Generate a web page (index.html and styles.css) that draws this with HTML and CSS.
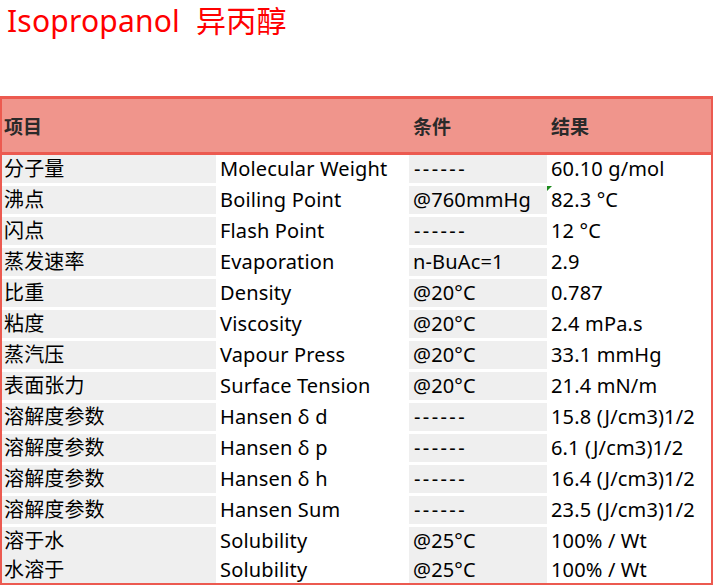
FILE: index.html
```html
<!DOCTYPE html>
<html lang="zh">
<head>
<meta charset="utf-8">
<title>Isopropanol 异丙醇</title>
<link rel="stylesheet" href="styles.css">
</head>
<body>
<h1 class="title">Isopropanol &nbsp;异丙醇</h1>
<table class="props">
  <colgroup>
    <col class="c1"><col class="c2"><col class="c3"><col class="c4">
  </colgroup>
  <thead>
    <tr><th>项目</th><th></th><th>条件</th><th>结果</th></tr>
  </thead>
  <tbody>
    <tr><td class="g">分子量</td><td>Molecular Weight</td><td class="g"><span class="dash">------</span></td><td>60.10 g/mol</td></tr>
    <tr><td class="g">沸点</td><td>Boiling Point</td><td class="g">@760mmHg</td><td class="note">82.3 °C</td></tr>
    <tr><td class="g">闪点</td><td>Flash Point</td><td class="g"><span class="dash">------</span></td><td>12 °C</td></tr>
    <tr><td class="g">蒸发速率</td><td>Evaporation</td><td class="g">n-BuAc=1</td><td>2.9</td></tr>
    <tr><td class="g">比重</td><td>Density</td><td class="g">@20°C</td><td>0.787</td></tr>
    <tr><td class="g">粘度</td><td>Viscosity</td><td class="g">@20°C</td><td>2.4 mPa.s</td></tr>
    <tr><td class="g">蒸汽压</td><td>Vapour Press</td><td class="g">@20°C</td><td>33.1 mmHg</td></tr>
    <tr><td class="g">表面张力</td><td>Surface Tension</td><td class="g">@20°C</td><td>21.4 mN/m</td></tr>
    <tr><td class="g">溶解度参数</td><td>Hansen δ d</td><td class="g"><span class="dash">------</span></td><td>15.8 (J/cm3)1/2</td></tr>
    <tr><td class="g">溶解度参数</td><td>Hansen δ p</td><td class="g"><span class="dash">------</span></td><td>6.1 (J/cm3)1/2</td></tr>
    <tr><td class="g">溶解度参数</td><td>Hansen δ h</td><td class="g"><span class="dash">------</span></td><td>16.4 (J/cm3)1/2</td></tr>
    <tr><td class="g">溶解度参数</td><td>Hansen Sum</td><td class="g"><span class="dash">------</span></td><td>23.5 (J/cm3)1/2</td></tr>
    <tr class="tight"><td class="g">溶于水</td><td>Solubility</td><td class="g">@25°C</td><td>100% / Wt</td></tr>
    <tr class="tight last"><td class="g">水溶于</td><td>Solubility</td><td class="g">@25°C</td><td>100% / Wt</td></tr>
  </tbody>
</table>
</body>
</html>
```

FILE: styles.css
```css
html, body {
  margin: 0;
  padding: 0;
  background: #ffffff;
}

body {
  font-family: "Noto Sans", "Noto Sans CJK SC", sans-serif;
  color: #000000;
}

.title {
  margin: 0;
  padding: 0 0 0 7px;
  height: 96px;
  font-size: 30px;
  font-weight: normal;
  line-height: 42px;
  color: #ff0000;
  font-family: "Noto Sans", "Noto Sans CJK SC", sans-serif;
  letter-spacing: 0.2px;
}

.props {
  width: 713px;
  border-collapse: separate;
  border-spacing: 0;
  table-layout: fixed;
  border-left: 2px solid #ec5a50;
  border-right: 2px solid #ec5a50;
  border-top: 3px solid #ec5a50;
  border-bottom: 2px solid #ec5a50;
  font-size: 20px;
}

.c1 { width: 214px; }
.c2 { width: 193px; }
.c3 { width: 138px; }
.c4 { width: 164px; }

.props th {
  height: 53px;
  padding: 0 0 0 4px;
  background: #f0958c;
  border-bottom: 3px solid #ec5a50;
  text-align: left;
  font-weight: bold;
  font-size: 19px;
  color: #2a2a2a;
  font-family: "Noto Sans CJK SC", sans-serif;
}

.props th:first-child {
  padding-left: 2px;
}

.props td {
  height: 28px;
  padding: 0 0 0 4px;
  border-bottom: 3px solid #ffffff;
  white-space: nowrap;
  line-height: 28px;
  vertical-align: middle;
  letter-spacing: 0.15px;
}

.props td:first-child {
  padding-left: 2px;
}

.props tr.tight td {
  border-bottom: 0;
}

.props tr.last td {
  height: 26px;
  padding-top: 2px;
  line-height: 26px;
}

.props td.g {
  background: #efefef;
}

.dash {
  letter-spacing: 2.4px;
  padding-left: 1px;
}

.props td.note {
  position: relative;
}

.props td.note::before {
  content: "";
  position: absolute;
  left: 0;
  top: 0;
  border-top: 5px solid #1b8a1b;
  border-right: 5px solid transparent;
}
```
